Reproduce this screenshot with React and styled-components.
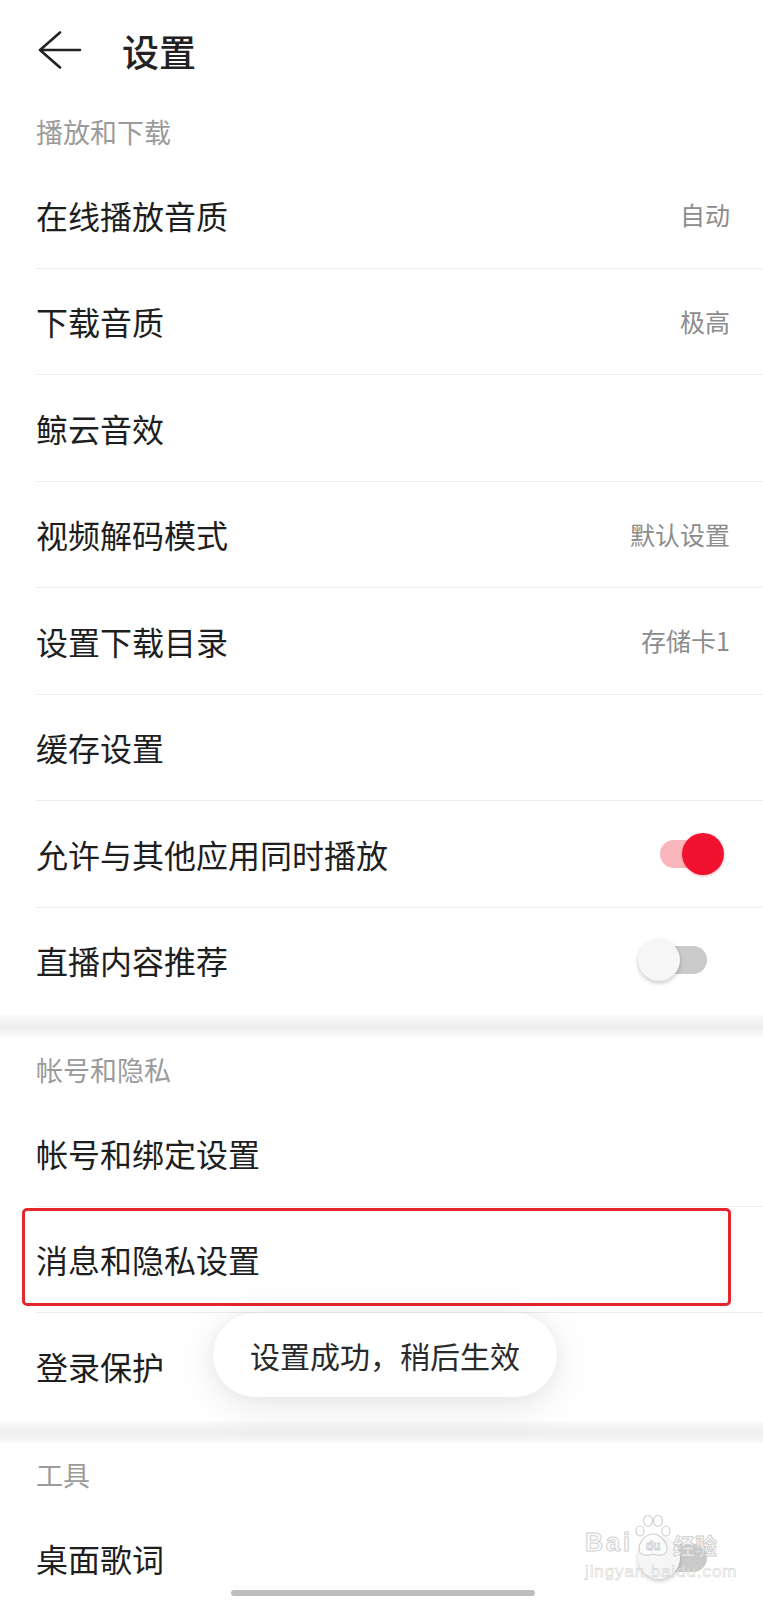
import React from "react";
import styled, { createGlobalStyle } from "styled-components";

const GlobalStyle = createGlobalStyle`
  * { box-sizing: border-box; }
  body {
    margin: 0;
    background: #ffffff;
    font-family: "Noto Sans CJK SC", "Noto Sans", sans-serif;
  }
`;

const Page = styled.div`
  position: relative;
  width: 763px;
  height: 1600px;
  overflow: hidden;
  background: #ffffff;
`;

const Header = styled.header`
  display: flex;
  align-items: center;
  height: 100px;
  padding: 0 0 0 38px;
  gap: 40px;
`;

const Title = styled.h1`
  margin: 0;
  font-size: 37px;
  font-weight: 500;
  color: #222222;
  line-height: 1;
  padding-top: 2px;
`;

const SectionLabel = styled.div`
  display: flex;
  align-items: center;
  height: 62px;
  padding-left: 36px;
  font-size: 27px;
  color: #9b9b9b;
`;

const Band = styled.div`
  height: 24px;
  background: linear-gradient(
    to bottom,
    #fdfdfd 0%,
    #f3f3f3 30%,
    #efefef 55%,
    #f4f4f4 80%,
    #fdfdfd 100%
  );
`;

const Row = styled.div`
  position: relative;
  display: flex;
  align-items: center;
  justify-content: space-between;
  height: 106.5px;
  margin-left: 36px;
  padding-right: 33px;
  border-bottom: 1px solid ${(p) => (p.$last ? "transparent" : "#ebebeb")};
`;

const Label = styled.span`
  font-size: 32px;
  color: #1e1e1e;
  line-height: 1;
`;

const Value = styled.span`
  font-size: 25px;
  color: #8c8c8c;
  line-height: 1;
`;

const Track = styled.span`
  position: relative;
  display: block;
  width: 58px;
  height: 28px;
  border-radius: 14px;
  margin-right: ${(p) => (p.$on ? "12px" : "23px")};
  background: ${(p) => (p.$on ? "#f9b6bd" : "#cacaca")};
`;

const Knob = styled.span`
  position: absolute;
  top: -7px;
  ${(p) => (p.$on ? "right: -6px;" : "left: -11px;")}
  width: 42px;
  height: 42px;
  border-radius: 50%;
  background: ${(p) => (p.$on ? "#f0122e" : "#f6f6f6")};
  box-shadow: ${(p) =>
    p.$on ? "0 1px 3px rgba(240, 18, 46, 0.3)" : "0 2px 4px rgba(0, 0, 0, 0.22)"};
`;

const Highlight = styled.div`
  position: absolute;
  left: -14px;
  right: 32px;
  top: 1px;
  bottom: 6px;
  border: 3px solid #e5262c;
  border-radius: 5px;
  pointer-events: none;
`;

const Toast = styled.div`
  position: absolute;
  left: 213px;
  top: 1313px;
  width: 344px;
  height: 84px;
  display: flex;
  align-items: center;
  justify-content: center;
  border-radius: 42px;
  background: #ffffff;
  box-shadow: 0 8px 40px rgba(0, 0, 0, 0.1), 0 0 14px rgba(0, 0, 0, 0.04);
  font-size: 30px;
  color: #2a2a2a;
`;

const HomeBar = styled.div`
  position: absolute;
  left: 231px;
  bottom: 4px;
  width: 304px;
  height: 6px;
  border-radius: 3px;
  background: #bdbdbd;
`;

const Watermark = styled.div`
  position: absolute;
  left: 585px;
  top: 1514px;
  display: flex;
  flex-direction: column;
  align-items: flex-start;
  opacity: 0.85;
  pointer-events: none;
`;

const MarkLine = styled.div`
  display: flex;
  align-items: flex-end;
`;

const MarkWord = styled.span`
  font-family: ${(p) =>
    p.$cjk ? '"Noto Sans CJK SC", sans-serif' : '"Liberation Sans", Arial, sans-serif'};
  font-size: ${(p) => (p.$cjk ? "22px" : "25px")};
  letter-spacing: ${(p) => (p.$cjk ? "0" : "3px")};
  line-height: 1;
  font-weight: 700;
  color: rgba(255, 255, 255, 0.7);
  -webkit-text-stroke: 1px #c9c9c9;
  margin-bottom: 3px;
`;

const MarkUrl = styled.span`
  font-family: "Liberation Sans", Arial, sans-serif;
  font-size: 17px;
  line-height: 1;
  color: rgba(255, 255, 255, 0.6);
  -webkit-text-stroke: 0.6px #cfcfcf;
  margin-top: 5px;
  letter-spacing: 0.9px;
`;

function BackArrow() {
  return (
    <svg width="44" height="38" viewBox="0 0 44 38" fill="none">
      <path
        d="M22 1.5 L2 19 L22 36.5 M2 19 H42"
        stroke="#222"
        strokeWidth="2.6"
        strokeLinecap="round"
        strokeLinejoin="round"
      />
    </svg>
  );
}

function Paw() {
  return (
    <svg width="40" height="44" viewBox="0 0 40 44" fill="rgba(255,255,255,0.7)">
      <g stroke="#c9c9c9" strokeWidth="1.2">
        <ellipse cx="7" cy="17" rx="4" ry="5" />
        <ellipse cx="15" cy="7" rx="4.5" ry="5.5" />
        <ellipse cx="25" cy="7" rx="4.5" ry="5.5" />
        <ellipse cx="33" cy="17" rx="4" ry="5" />
        <path d="M20 20 C12 20 5 30 6 36 C7 42 14 42 20 40 C26 42 33 42 34 36 C35 30 28 20 20 20 Z" />
      </g>
      <text
        x="20"
        y="36"
        textAnchor="middle"
        fontFamily="Liberation Sans, Arial, sans-serif"
        fontSize="12"
        fontWeight="700"
        fill="rgba(255,255,255,0.8)"
        stroke="#c4c4c4"
        strokeWidth="0.8"
      >
        du
      </text>
    </svg>
  );
}

function Toggle({ on }) {
  return (
    <Track $on={on}>
      <Knob $on={on} />
    </Track>
  );
}

function SettingRow({ label, value, toggle, last, highlight }) {
  return (
    <Row $last={last}>
      <Label>{label}</Label>
      {value && <Value>{value}</Value>}
      {toggle !== undefined && <Toggle on={toggle} />}
      {highlight && <Highlight />}
    </Row>
  );
}

const sections = [
  {
    title: "播放和下载",
    rows: [
      { label: "在线播放音质", value: "自动" },
      { label: "下载音质", value: "极高" },
      { label: "鲸云音效" },
      { label: "视频解码模式", value: "默认设置" },
      { label: "设置下载目录", value: "存储卡1" },
      { label: "缓存设置" },
      { label: "允许与其他应用同时播放", toggle: true },
      { label: "直播内容推荐", toggle: false },
    ],
  },
  {
    title: "帐号和隐私",
    rows: [
      { label: "帐号和绑定设置" },
      { label: "消息和隐私设置", highlight: true },
      { label: "登录保护" },
    ],
  },
  {
    title: "工具",
    rows: [{ label: "桌面歌词", toggle: false }],
  },
];

export default function App() {
  return (
    <>
      <GlobalStyle />
      <Page>
        <Header>
          <BackArrow />
          <Title>设置</Title>
        </Header>
        {sections.map((section, si) => (
          <React.Fragment key={section.title}>
            {si > 0 && <Band />}
            <SectionLabel>{section.title}</SectionLabel>
            {section.rows.map((row, ri) => (
              <SettingRow
                key={row.label}
                {...row}
                last={ri === section.rows.length - 1}
              />
            ))}
          </React.Fragment>
        ))}
        <Toast>设置成功，稍后生效</Toast>
        <Watermark>
          <MarkLine>
            <MarkWord>Bai</MarkWord>
            <Paw />
            <MarkWord $cjk>经验</MarkWord>
          </MarkLine>
          <MarkUrl>jingyan.baidu.com</MarkUrl>
        </Watermark>
        <HomeBar />
      </Page>
    </>
  );
}
